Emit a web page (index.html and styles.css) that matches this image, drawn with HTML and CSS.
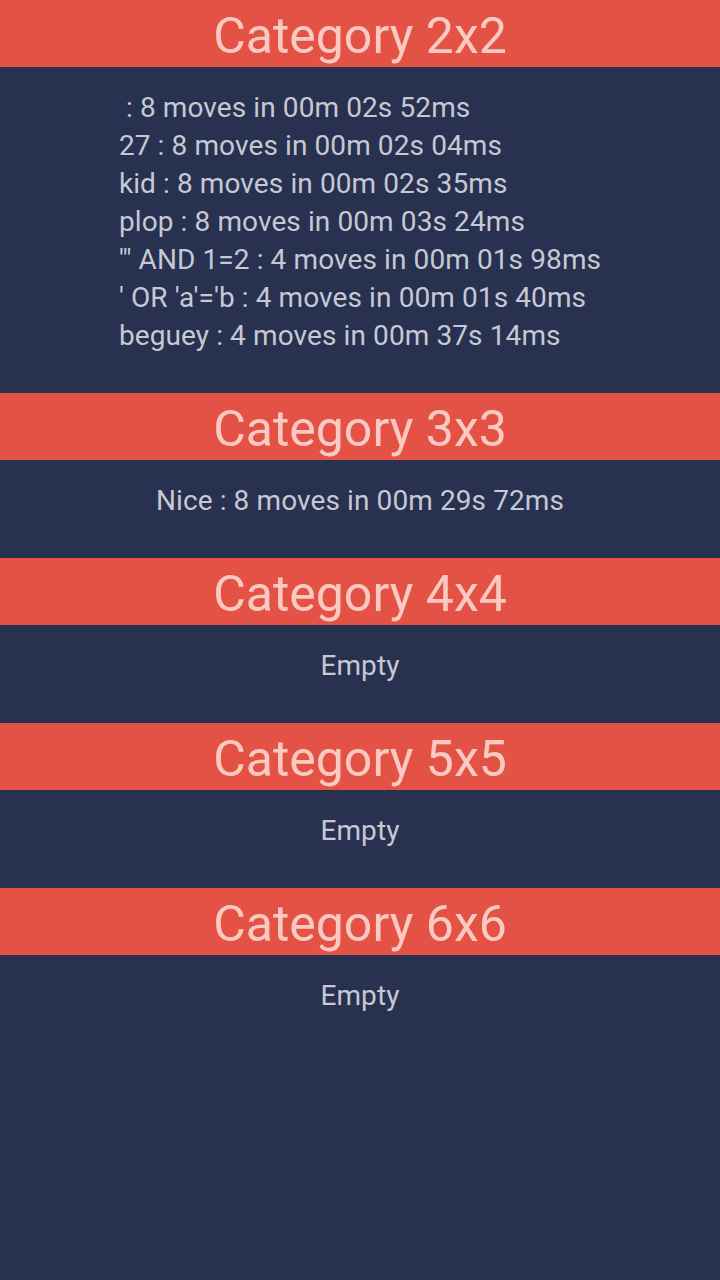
FILE: index.html
```html
<!DOCTYPE html>
<html>
<head>
<meta charset="utf-8">
<link rel="stylesheet" href="styles.css">
</head>
<body>
<main class="page">
  <section class="cat">
    <h1 class="cat-title">Category 2x2</h1>
    <div class="cat-body">
      <ul class="scores">
        <li> : 8 moves in 00m 02s 52ms</li>
        <li>27 : 8 moves in 00m 02s 04ms</li>
        <li>kid : 8 moves in 00m 02s 35ms</li>
        <li>plop : 8 moves in 00m 03s 24ms</li>
        <li>'" AND 1=2 : 4 moves in 00m 01s 98ms</li>
        <li>' OR 'a'='b : 4 moves in 00m 01s 40ms</li>
        <li>beguey : 4 moves in 00m 37s 14ms</li>
      </ul>
    </div>
  </section>
  <section class="cat">
    <h1 class="cat-title">Category 3x3</h1>
    <div class="cat-body">
      <ul class="scores">
        <li>Nice : 8 moves in 00m 29s 72ms</li>
      </ul>
    </div>
  </section>
  <section class="cat">
    <h1 class="cat-title">Category 4x4</h1>
    <div class="cat-body">
      <ul class="scores"><li>Empty</li></ul>
    </div>
  </section>
  <section class="cat">
    <h1 class="cat-title">Category 5x5</h1>
    <div class="cat-body">
      <ul class="scores"><li>Empty</li></ul>
    </div>
  </section>
  <section class="cat">
    <h1 class="cat-title">Category 6x6</h1>
    <div class="cat-body">
      <ul class="scores"><li>Empty</li></ul>
    </div>
  </section>
</main>
</body>
</html>
```

FILE: styles.css
```css
html, body {
  margin: 0;
  padding: 0;
  background: #28314f;
}
body {
  font-family: Roboto, "Liberation Sans", sans-serif;
  width: 720px;
  min-height: 1280px;
}
.page {
  display: flex;
  flex-direction: column;
}
.cat-title {
  margin: 0;
  height: 67px;
  overflow: hidden;
  background: #e35244;
  color: #fac9c1;
  font-weight: 400;
  font-size: 50px;
  line-height: 72px;
  text-align: center;
}
.cat-body {
  display: flex;
  justify-content: center;
  padding: 22px 0 38px;
}
.scores {
  list-style: none;
  margin: 0;
  padding: 0;
  color: #c6c9d4;
  font-size: 28px;
  letter-spacing: 0.1px;
  line-height: 38px;
}
.scores li {
  white-space: pre;
}
```
